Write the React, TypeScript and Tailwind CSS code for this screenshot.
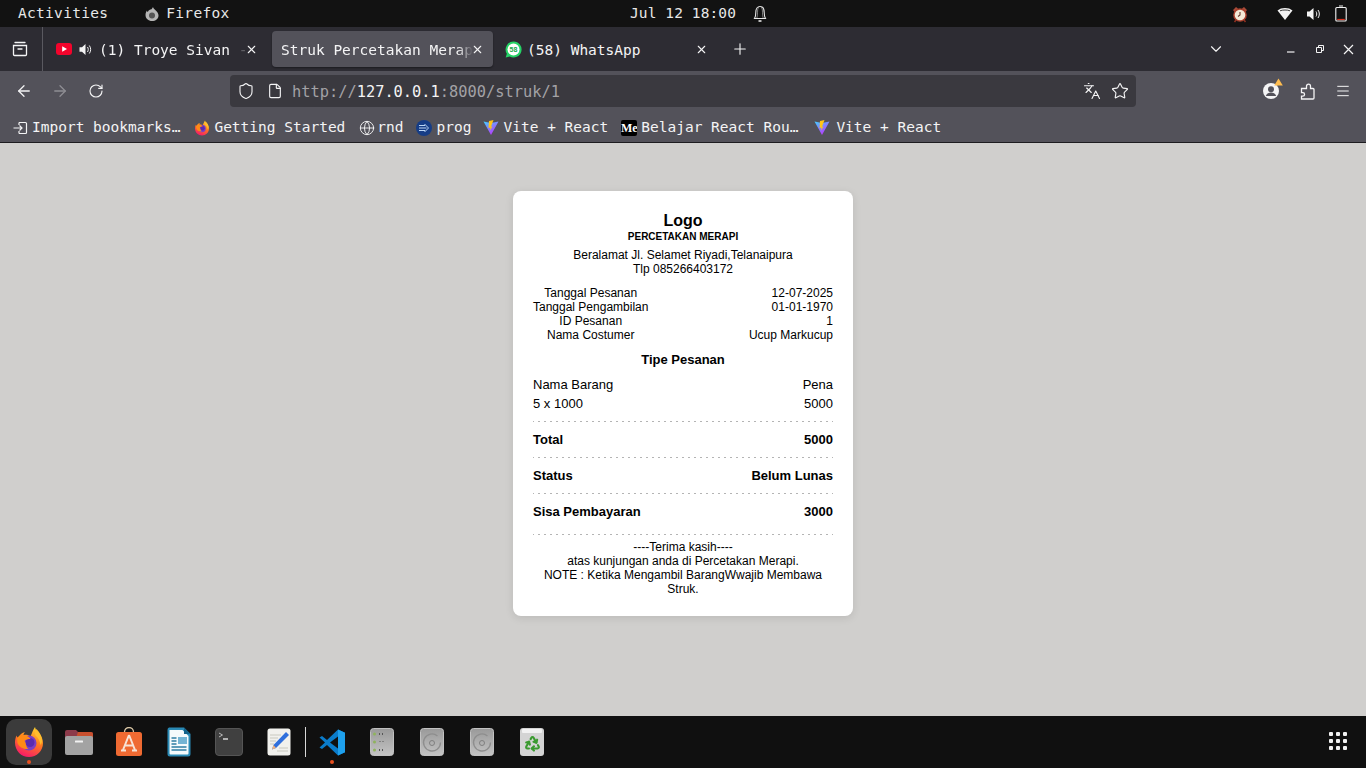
import { ArrowLeft, ArrowRight, ChevronDown, File, Globe, Languages, Menu, Plus, Recycle, RotateCw, Shield, Star, X } from "lucide-react";

const FirefoxLogo = ({ size = 16 }: { size?: number }) => (
  <svg width={size} height={size} viewBox="0 0 32 32" className="shrink-0">
    <defs>
      <linearGradient id="ffa" x1="0.7" y1="0" x2="0.3" y2="1">
        <stop offset="0" stopColor="#ffd52e" />
        <stop offset="0.45" stopColor="#ff7a1f" />
        <stop offset="1" stopColor="#f5156c" />
      </linearGradient>
    </defs>
    <path d="M22 1c.6 3 2.300 4.500 4 6.500 2.600 3 4 6 4 9.500 0 8-6.300 14-14 14S2 25 2 16.500C2 14 2.600 11.500 3.600 9.500c.3 1.300.8 2 1.500 2.500C6.500 8.500 9 6.500 12 6c-1 1.200-1.500 2.200-1.500 3.200 2.500-.9 5-.2 7 1.300C19 7 20 4 22 1z" fill="url(#ffa)" />
    <path d="M23.500 3c3 3 5.500 7 5.500 11 0 2-.5 3.500-1.500 5-.5-4-2-7-5-9.500C21.500 7 22 5 23.500 3z" fill="#ffbd2e" />
    <circle cx="16" cy="17" r="7.500" fill="#7b3fc4" />
    <circle cx="17" cy="16.500" r="4.500" fill="#5a2bb0" />
    <path d="M4 12c2-2.500 5-3 8-2.500 3 .5 5 2 5.500 3.500-2 0-5 .5-6 2 2 2 1 6 4 8-5 .5-9.500-2-11-6-.5-2 0-4 -.5-5z" fill="#ff8a16" />
  </svg>
);

const ViteLogo = () => (
  <svg width="16" height="17" viewBox="0 0 32 32" className="shrink-0">
    <defs>
      <linearGradient id="vitea" x1="0" y1="0" x2="0.6" y2="1">
        <stop offset="0" stopColor="#41d1ff" />
        <stop offset="1" stopColor="#bd34fe" />
      </linearGradient>
    </defs>
    <path d="M1 4l15 27L31 4 16 7z" fill="url(#vitea)" />
    <path d="M21 1l-9 2-1 14 4-1-1 6 5-8-3 .5z" fill="#ffc517" />
  </svg>
);

const TabClose = () => <X size={13} strokeWidth={2} className="shrink-0 text-[#f4f4f5]" />;

const BookmarkItem = ({ icon, label, gap = "gap-[4px]" }: { icon: React.ReactNode; label: string; gap?: string }) => (
  <div className={`flex items-center ${gap}`}>
    {icon}
    <span>{label}</span>
  </div>
);

const TopBar = () => (
  <div className="relative flex h-[27px] items-center bg-[#121212] pl-[18px] pr-[18px] text-[14.500px] tracking-[0.3px] text-[#e8e8e8]">
    <span>Activities</span>
    <div className="ml-[36px] flex items-center gap-[6px]">
      <svg width="16" height="16" viewBox="0 0 16 16">
        <path d="M9 1c.3 1.500 1.500 2 2.500 3.200C13.400 6 14.500 7.500 14.500 9.500 14.500 13 11.600 15 8 15s-6.500-2.500-6.500-6c0-2 .8-3.500 1.500-4.500 0 .8.300 1.300.8 1.600C4.500 4.300 6 3.400 7.500 3.300 8 2.500 8.500 1.800 9 1z" fill="#b5b5b5" />
        <circle cx="8" cy="9.500" r="3" fill="#555" />
      </svg>
      <span>Firefox</span>
    </div>
    <div className="absolute left-[630px] flex items-center gap-[16px] tracking-[0.1px]">
      <span>Jul 12 18:00</span>
      <svg width="16" height="18" viewBox="0 0 16 18" fill="none" stroke="#e8e8e8" strokeWidth="1.100">
        <path d="M2.500 13.500c1-1.500 1.300-3.500 1.300-6C3.800 4 5.500 1.500 8 1.500s4.200 2.500 4.200 6c0 2.500.3 4.500 1.300 6z" />
        <path d="M6.500 2c-.8 1.500-1 3.500-1 5.500 0 2.500-.2 4-.7 5.500M9.500 2c.8 1.500 1 3.500 1 5.500 0 2.500.2 4 .7 5.500" strokeWidth="0.500" />
        <path d="M6.500 16h3" strokeWidth="1.600" />
      </svg>
    </div>
    <div className="ml-auto mr-px flex items-center gap-[19px]">
      <svg width="18" height="18" viewBox="0 0 18 18" className="mr-[9px]">
        <path d="M2 5l3-3 2 1.500L3.500 7zM16 5l-3-3-2 1.500L14.500 7z" fill="#a84a38" />
        <path d="M5 15l-1.500 2M13 15l1.500 2" stroke="#8e3022" strokeWidth="1.500" />
        <circle cx="9" cy="10" r="6.800" fill="#a8402d" />
        <circle cx="9" cy="10" r="5.300" fill="#f3ead8" />
        <path d="M9 7v3l-2 1.500" stroke="#6b3a2c" strokeWidth="1.100" fill="none" />
      </svg>
      <svg width="16" height="14" viewBox="0 0 16 14">
        <path d="M0.500 3.500C2.500 1.800 5 1 8 1s5.500.8 7.500 2.500L8 13z" fill="#f2f2f2" />
        <path d="M3 3.800C4.500 3.200 6 3 8 3s3.500.2 5 .8" stroke="#121212" strokeWidth="0.800" fill="none" />
      </svg>
      <svg width="15" height="14" viewBox="0 0 15 14" className="-ml-[6px]">
        <path d="M1 4.500h2.500L7.500 1v12l-4-3.500H1z" fill="#f2f2f2" />
        <path d="M10 4.500c1 1.500 1 3.500 0 5M12 3c1.800 2.300 1.800 5.700 0 8" stroke="#f2f2f2" strokeWidth="1" fill="none" />
      </svg>
      <svg width="12" height="17" viewBox="0 0 12 17" className="-ml-[5px] -mt-[1px]" fill="none">
        <path d="M4 1h4M1.800 2.500h8.400a1 1 0 0 1 1 1v11.500a1 1 0 0 1-1 1H1.800a1 1 0 0 1-1-1V3.500a1 1 0 0 1 1-1z" stroke="#f2f2f2" strokeWidth="1.100" />
        <path d="M2.200 14.500h7.600" stroke="#d8321f" strokeWidth="1.200" />
      </svg>
    </div>
  </div>
);

const TabBar = () => (
  <div className="flex h-[44px] items-center bg-[#2d2c33] text-[14.500px] text-[#f4f4f5]">
    <div className="flex h-full w-[43px] items-center justify-center border-r border-[#5a5960] pr-[3px]">
      <svg width="16" height="16" viewBox="0 0 16 16" fill="none" stroke="#f4f4f5" strokeWidth="1.300">
        <path d="M3 1.500h10M1.500 4.500h13v9a1 1 0 0 1-1 1h-11a1 1 0 0 1-1-1zM6 8h4" strokeLinecap="round" />
      </svg>
    </div>
    <div className="ml-[4px] flex h-[36px] w-[220px] items-center pl-[9px] pr-[9px]">
      <svg width="16" height="12" viewBox="0 0 16 12" className="shrink-0">
        <rect width="16" height="12" rx="3" fill="#f3042c" />
        <path d="M6.200 3.300v5.400L11 6z" fill="#fff" />
      </svg>
      <svg width="13" height="13" viewBox="0 0 13 13" className="ml-[7px] shrink-0">
        <path d="M0.500 4.300h2.500L6.500 1v11L3 8.700H0.500z" fill="#f4f4f5" />
        <path d="M8.500 4c1 1.500 1 3.500 0 5M10.300 2.500c1.800 2.300 1.800 5.700 0 8" stroke="#f4f4f5" strokeWidth="1" fill="none" />
      </svg>
      <span className="ml-[7px] w-[148px] shrink-0 whitespace-nowrap pt-[4px] [mask-image:linear-gradient(90deg,black_88%,rgba(0,0,0,0.25)_95%)]">(1) Troye Sivan -</span>
      <span className="-ml-[2px]"><TabClose /></span>
    </div>
    <div className="ml-[5px] flex h-[36px] w-[221px] items-center rounded-[4px] bg-[#53525a] pl-[9px] pr-[9px] shadow-[0_1px_2px_rgba(0,0,0,0.4)]">
      <span className="w-[192px] shrink-0 whitespace-nowrap pt-[4px] [mask-image:linear-gradient(90deg,black_92%,transparent)]">Struk Percetakan Merap</span>
      <span className="-ml-[2px]"><TabClose /></span>
    </div>
    <div className="ml-[5px] flex h-[36px] w-[218px] items-center pl-[7px] pr-[8px]">
      <svg width="17" height="17" viewBox="0 0 17 17" className="shrink-0">
        <path d="M8.500 0.500a8 8 0 1 1-3.800 15L0.700 16.500l1.100-3.800A8 8 0 0 1 8.500 0.500z" fill="#25d366" />
        <circle cx="8.500" cy="8.500" r="6" fill="#fff" />
        <text x="8.500" y="11" textAnchor="middle" fontSize="7" fontWeight="700" fill="#14a84a" fontFamily="Liberation Sans, sans-serif">58</text>
      </svg>
      <span className="ml-[5px] pt-[4px]">(58) WhatsApp</span>
      <span className="ml-auto"><TabClose /></span>
    </div>
    <Plus size={18} strokeWidth={1.500} className="ml-[15px]" />
    <ChevronDown size={18} strokeWidth={1.500} className="ml-[458px]" />
    <svg width="10" height="10" viewBox="0 0 10 10" className="ml-[61px]" stroke="#f4f4f5" strokeWidth="1.200">
      <path d="M1 8h7.500" />
    </svg>
    <svg width="10" height="10" viewBox="0 0 10 10" className="ml-[19px]" stroke="#f4f4f5" fill="none" strokeWidth="1">
      <path d="M1.500 3.500h5v5h-5zM3.500 3V1.500h5v5H7" />
    </svg>
    <svg width="11" height="11" viewBox="0 0 11 11" className="ml-[18px]" stroke="#f4f4f5" strokeWidth="1.200">
      <path d="M1 1l9 9M10 1l-9 9" />
    </svg>
  </div>
);

const NavBar = () => (
  <div className="flex h-[40px] items-center bg-[#53525a] text-[#f4f4f5]">
    <ArrowLeft size={18} strokeWidth={1.700} className="ml-[15px]" />
    <ArrowRight size={18} strokeWidth={1.700} className="ml-[18px] text-[#8f8e94]" />
    <RotateCw size={16} strokeWidth={1.700} className="ml-[19px]" />
    <div className="ml-[126px] flex h-[32px] w-[906px] items-center rounded-[4px] bg-[#3a393f] text-[15.350px]">
      <Shield size={18} strokeWidth={1.500} className="ml-[7px]" />
      <File size={16} strokeWidth={1.700} className="ml-[12px]" />
      <span className="ml-[9px] pt-[4px]">
        <span className="text-[#a3a2a6]">http://</span>127.0.0.1<span className="text-[#a3a2a6]">:8000/struk/1</span>
      </span>
      <Languages size={18} strokeWidth={1.500} className="ml-auto" />
      <Star size={18} strokeWidth={1.500} className="ml-[10px] mr-[7px]" />
    </div>
    <div className="relative ml-[127px]">
      <svg width="16" height="16" viewBox="0 0 16 16">
        <circle cx="8" cy="8" r="8" fill="#f4f4f5" />
        <circle cx="8" cy="6.300" r="3" fill="#53525a" />
        <path d="M2.800 13c1-2.500 3-3.400 5.200-3.400s4.200.9 5.200 3.400" fill="#53525a" />
      </svg>
      <svg width="9" height="8" viewBox="0 0 9 8" className="absolute -right-[4px] -top-[5px]">
        <path d="M4.500 0.500L8.800 7.500H0.200z" fill="#ffbd4f" />
      </svg>
    </div>
    <svg width="16" height="17" viewBox="0 0 16 17" fill="none" stroke="#f4f4f5" strokeWidth="1.300" className="ml-[20px]">
      <path d="M7.500 5.500V3.200a2 2 0 0 1 4 0v2.300H14a1 1 0 0 1 1 1V15a1 1 0 0 1-1 1H2.500v-2.800h1.300a1.500 1.500 0 0 0 0-3.500H2.500V5.500z" />
    </svg>
    <Menu size={16} strokeWidth={1.500} className="ml-[20px]" />
  </div>
);

const BookmarksBar = () => (
  <div className="flex h-[32px] items-center gap-[12px] border-b border-[#1d1c20] bg-[#53525a] pl-[13px] pt-[2px] text-[14.500px] text-[#f4f4f5]">
    <BookmarkItem
      label="Import bookmarks…"
      icon={
        <svg width="15" height="14" viewBox="0 0 15 14" fill="none" stroke="#f4f4f5" strokeWidth="1.200">
          <path d="M6 1.500h6.500a1 1 0 0 1 1 1v9a1 1 0 0 1-1 1H6M6 4v-2.500M6 10v2.500M.5 7H9M6.500 4.500L9 7l-2.500 2.500" />
        </svg>
      }
    />
    <div className="ml-[2px]">
      <BookmarkItem label="Getting Started" icon={<FirefoxLogo />} />
    </div>
    <div className="ml-[2px]">
      <BookmarkItem label="rnd" gap="gap-[2px]" icon={<Globe size={16} strokeWidth={1.400} />} />
    </div>
    <BookmarkItem
      label="prog"
      icon={
        <svg width="16" height="16" viewBox="0 0 16 16" className="mr-[1px]">
          <circle cx="8" cy="8" r="8" fill="#163d86" />
          <path d="M3 5.500h6M3 8h7.500M3 10.500h6M8.500 4L12.500 8l-4 4" stroke="#bcd6f5" strokeWidth="1" fill="none" />
        </svg>
      }
    />
    <BookmarkItem label="Vite + React" icon={<ViteLogo />} />
    <div className="ml-px">
      <BookmarkItem
        label="Belajar React Rou…"
        icon={
          <div className="flex h-[16px] w-[16px] items-center justify-center overflow-hidden rounded-[2px] bg-black font-['Liberation_Serif',serif] text-[12px] font-bold text-white">Me</div>
        }
      />
    </div>
    <div className="ml-[4px]">
      <BookmarkItem label="Vite + React" gap="gap-[6px]" icon={<ViteLogo />} />
    </div>
  </div>
);

const Row = ({ label, value, bold }: { label: string; value: string; bold?: boolean }) => (
  <div className={`flex justify-between text-[13px] leading-[15px] ${bold ? "font-bold" : ""}`}>
    <span>{label}</span>
    <span>{value}</span>
  </div>
);

const Divider = ({ className }: { className: string }) => (
  <div className={`h-px bg-[repeating-linear-gradient(90deg,#b4b4b4_0,#b4b4b4_1px,transparent_1px,transparent_5px,#b4b4b4_5px,#b4b4b4_6px)] ${className}`} />
);

const Receipt = () => (
  <div className="h-[425px] w-[340px] rounded-lg bg-white p-[20px] font-['Liberation_Sans',sans-serif] text-[12px] leading-[14px] text-black shadow-[0_2px_8px_rgba(0,0,0,0.1)]">
    <div className="text-center">
      <div className="mt-px text-[16px] font-bold leading-[18px]">Logo</div>
      <div className="mt-px text-[10px] font-bold leading-[12px]">PERCETAKAN MERAPI</div>
      <div className="mt-[5px]">Beralamat Jl. Selamet Riyadi,Telanaipura</div>
      <div>Tlp 085266403172</div>
    </div>
    <div className="mt-[10px] grid grid-cols-[auto_1fr]">
      <span className="text-center">Tanggal Pesanan</span>
      <span className="text-right">12-07-2025</span>
      <span className="text-center">Tanggal Pengambilan</span>
      <span className="text-right">01-01-1970</span>
      <span className="text-center">ID Pesanan</span>
      <span className="text-right">1</span>
      <span className="text-center">Nama Costumer</span>
      <span className="text-right">Ucup Markucup</span>
    </div>
    <div className="mt-[10px] text-center text-[13px] font-bold leading-[15px]">Tipe Pesanan</div>
    <div className="mt-[10px]">
      <Row label="Nama Barang" value="Pena" />
    </div>
    <div className="mt-[4px]">
      <Row label="5 x 1000" value="5000" />
    </div>
    <Divider className="my-[10px]" />
    <Row label="Total" value="5000" bold />
    <Divider className="my-[10px]" />
    <Row label="Status" value="Belum Lunas" bold />
    <Divider className="my-[10px]" />
    <Row label="Sisa Pembayaran" value="3000" bold />
    <Divider className="mb-[5px] mt-[15px]" />
    <div className="text-center">
      <div>----Terima kasih----</div>
      <div>atas kunjungan anda di Percetakan Merapi.</div>
      <div>NOTE : Ketika Mengambil BarangWwajib Membawa Struk.</div>
    </div>
  </div>
);

const DockCell = ({ children, active, dot }: { children: React.ReactNode; active?: boolean; dot?: boolean }) => (
  <div className="relative flex h-[46px] w-[50px] items-center justify-center">
    {active && <div className="absolute left-[2px] top-0 h-[46px] w-[46px] rounded-[10px] bg-[#3b3b3b]" />}
    <div className="relative flex">{children}</div>
    {dot && <div className="absolute bottom-[1px] left-[23px] h-[4px] w-[4px] rounded-full bg-[#e9501f]" />}
  </div>
);

const DiskIcon = () => (
  <svg width="24" height="28" viewBox="0 0 24 28">
    <defs>
      <linearGradient id="tile" x1="0" y1="0" x2="0" y2="1">
        <stop offset="0" stopColor="#999999" />
        <stop offset="1" stopColor="#c4c4c4" />
      </linearGradient>
    </defs>
    <rect x="0.500" y="0.500" width="23" height="27" rx="3" fill="url(#tile)" stroke="#c2c2c2" />
    <path d="M17.500 8a8.500 8.500 0 1 0 3 6.500" stroke="#8e8e8e" strokeWidth="1.300" fill="none" />
    <circle cx="12" cy="15" r="2.500" stroke="#808080" strokeWidth="1" fill="none" />
  </svg>
);

const Dock = () => (
  <div className="flex h-[52px] items-start bg-[#101010] pl-[4px] pt-[3px]">
    <DockCell active dot>
      <FirefoxLogo size={32} />
    </DockCell>
    <DockCell>
      <svg width="30" height="27" viewBox="0 0 30 27">
        <path d="M1 3a2 2 0 0 1 2-2h9l2 2h13a2 2 0 0 1 2 2v6H1z" fill="#8c3a4a" />
        <path d="M14 3h13a2 2 0 0 1 2 2v4H12z" fill="#c8502f" />
        <rect x="1" y="7" width="28" height="19" rx="2" fill="#a3a3a3" />
        <rect x="11" y="11.500" width="8" height="2" rx="0.500" fill="#f2f2f2" />
      </svg>
    </DockCell>
    <DockCell>
      <svg width="28" height="30" viewBox="0 0 28 30">
        <path d="M9.500 7V5a4.500 4.500 0 0 1 9 0v2" stroke="#d9c6a5" strokeWidth="1.300" fill="none" />
        <rect x="1" y="5" width="26" height="24" rx="2.500" fill="#ef6a32" />
        <path d="M14 8l-6 15M14 8l6 15M9.500 18.500h9M6 23.500h5M17 23.500h5" stroke="#f7e3d6" strokeWidth="2" fill="none" />
      </svg>
    </DockCell>
    <DockCell>
      <svg width="24" height="30" viewBox="0 0 24 30">
        <path d="M2 0.500h15l6.500 6.500v20a2.500 2.500 0 0 1-2.500 2.500H3A2.500 2.500 0 0 1 .5 27V3A2.500 2.500 0 0 1 2 .5z" fill="#2a8ab5" />
        <path d="M2.500 3h13l6 6v17.500a1 1 0 0 1-1 1h-17a1 1 0 0 1-1-1z" fill="#f5fafc" />
        <path d="M17 .5l6.500 6.500H17z" fill="#14628a" />
        <rect x="11" y="10" width="9" height="7" fill="#74b4d4" />
        <path d="M4.500 11h5M4.500 14h5M4.500 17h5M4.500 20h15M4.500 23h15" stroke="#2f7da3" strokeWidth="1.300" />
      </svg>
    </DockCell>
    <DockCell>
      <svg width="28" height="28" viewBox="0 0 28 28">
        <rect x="0.500" y="0.500" width="27" height="27" rx="3.500" fill="#404040" stroke="#555" />
        <path d="M4 5l3.500 2L4 9" stroke="#b8b8b8" strokeWidth="1" fill="none" />
        <path d="M8 11h5" stroke="#f2f2f2" strokeWidth="1.300" />
      </svg>
    </DockCell>
    <DockCell>
      <svg width="24" height="28" viewBox="0 0 24 28">
        <rect x="0.500" y="0.500" width="23" height="27" rx="2.500" fill="#f1f1ed" />
        <path d="M3 7h11M3 10h8M3 13h6M3 16h4M12 20h9M10 23h11" stroke="#c9c9c0" strokeWidth="1.200" />
        <path d="M19 4l3 3L9 20l-4 1.500L6.500 17z" fill="#2f6fdc" />
        <path d="M6.500 17L9 20l-4 1.500z" fill="#f0b17a" />
      </svg>
    </DockCell>
    <div className="ml-px mt-[8px] h-[30px] w-px bg-[#d8d8d8]" />
    <div className="ml-px flex">
      <DockCell dot>
        <svg width="27" height="27" viewBox="0 0 27 27">
          <path d="M19 .5l7 3.300v19.400l-7 3.300L8 16l-5 4-2.500-1.500L6 13.500.5 8.500 3 7l5 4z" fill="#0a7ccb" />
          <path d="M19 .5l7 3.300v19.400l-7 3.300z" fill="#1ea0ed" />
          <path d="M19 7.500v12L11 13.500z" fill="#101010" />
        </svg>
      </DockCell>
      <DockCell>
        <svg width="24" height="28" viewBox="0 0 24 28">
          <rect x="0.500" y="0.500" width="23" height="27" rx="3" fill="url(#tile)" stroke="#c0c0c0" />
          <circle cx="4.500" cy="6" r="1.500" fill="#8fb45c" />
          <circle cx="4.500" cy="14" r="1.500" fill="#8fb45c" />
          <circle cx="4.500" cy="22" r="1.500" fill="#8fb45c" />
          <path d="M9.500 5v2M12.500 5v2M9.500 13.500h1M12.500 13.500h1M9.500 21v2M12.500 21v2" stroke="#555" strokeWidth="1" />
        </svg>
      </DockCell>
      <DockCell>
        <DiskIcon />
      </DockCell>
      <DockCell>
        <DiskIcon />
      </DockCell>
      <DockCell>
        <div className="relative flex h-[28px] w-[24px] items-end justify-center rounded-[3px] bg-[#d4d4d4] pb-[4px]">
          <div className="absolute left-[2px] right-[2px] top-[1px] h-[4px] rounded-[1px] bg-[#f2f2f2]" />
          <Recycle size={17} strokeWidth={3} className="text-[#3a9a2f]" />
        </div>
      </DockCell>
    </div>
    <div className="ml-auto mr-[19px] mt-[13px] grid grid-cols-3 gap-[3px]">
      {Array.from({ length: 9 }).map((_, i) => (
        <div key={i} className="h-[4px] w-[4px] rounded-[1px] bg-[#f2f2f2]" />
      ))}
    </div>
  </div>
);

export default function App() {
  return (
    <div className="flex h-screen flex-col overflow-hidden bg-[#d0cfcd] font-['DejaVu_Sans_Mono',monospace]">
      <TopBar />
      <TabBar />
      <NavBar />
      <BookmarksBar />
      <main className="flex flex-1 justify-center pt-[48px]">
        <Receipt />
      </main>
      <Dock />
    </div>
  );
}
